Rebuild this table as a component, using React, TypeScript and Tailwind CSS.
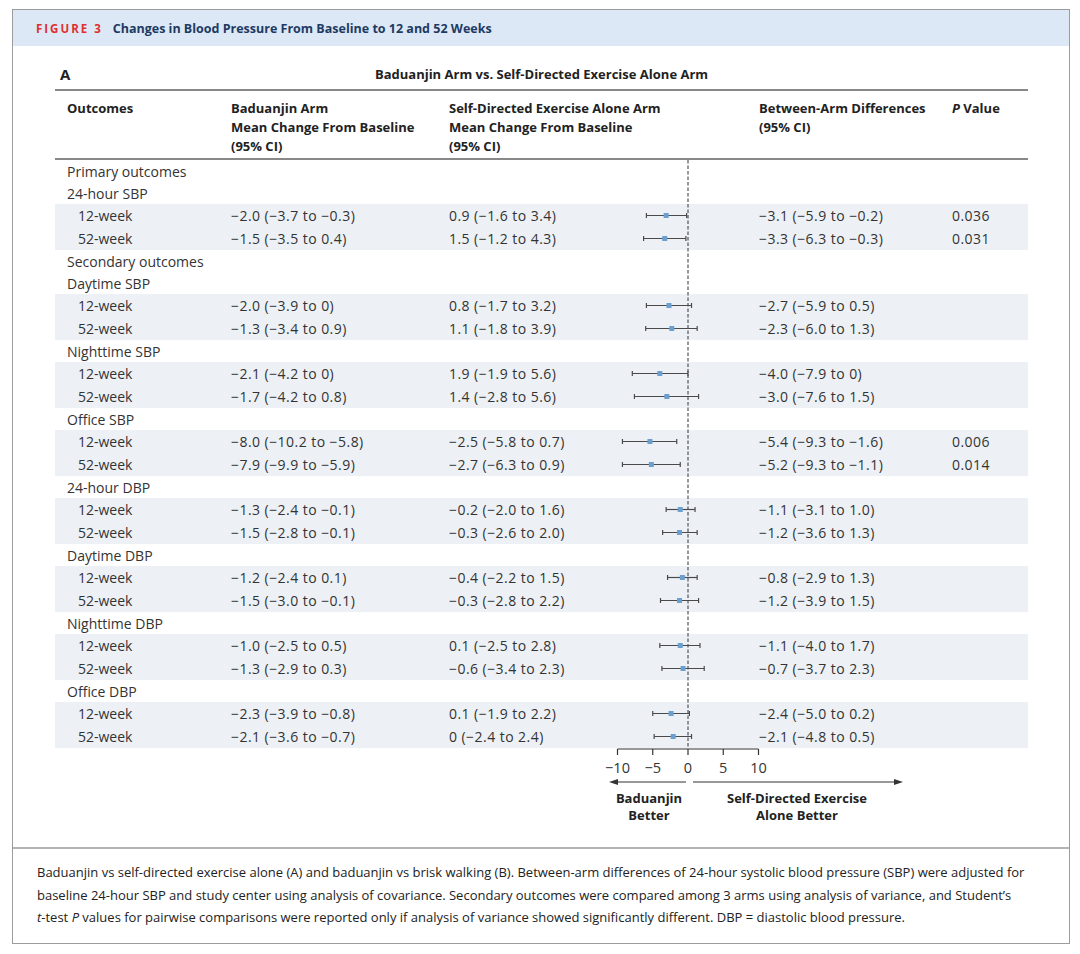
import React from 'react';

type Row = { label: string; b: string; s: string; d: string; est: number; lo: number; hi: number; p?: string };
type Group = { title?: string; head?: string; rows: Row[] };

const groups: Group[] = [
    {
        title: 'Primary outcomes',
        head: '24-hour SBP',
        rows: [
            { label: '12-week', b: '−2.0 (−3.7 to −0.3)', s: '0.9 (−1.6 to 3.4)', d: '−3.1 (−5.9 to −0.2)', est: -3.1, lo: -5.9, hi: -0.2, p: '0.036' },
            { label: '52-week', b: '−1.5 (−3.5 to 0.4)', s: '1.5 (−1.2 to 4.3)', d: '−3.3 (−6.3 to −0.3)', est: -3.3, lo: -6.3, hi: -0.3, p: '0.031' },
        ],
    },
    {
        title: 'Secondary outcomes',
        head: 'Daytime SBP',
        rows: [
            { label: '12-week', b: '−2.0 (−3.9 to 0)', s: '0.8 (−1.7 to 3.2)', d: '−2.7 (−5.9 to 0.5)', est: -2.7, lo: -5.9, hi: 0.5 },
            { label: '52-week', b: '−1.3 (−3.4 to 0.9)', s: '1.1 (−1.8 to 3.9)', d: '−2.3 (−6.0 to 1.3)', est: -2.3, lo: -6.0, hi: 1.3 },
        ],
    },
    {
        head: 'Nighttime SBP',
        rows: [
            { label: '12-week', b: '−2.1 (−4.2 to 0)', s: '1.9 (−1.9 to 5.6)', d: '−4.0 (−7.9 to 0)', est: -4.0, lo: -7.9, hi: 0 },
            { label: '52-week', b: '−1.7 (−4.2 to 0.8)', s: '1.4 (−2.8 to 5.6)', d: '−3.0 (−7.6 to 1.5)', est: -3.0, lo: -7.6, hi: 1.5 },
        ],
    },
    {
        head: 'Office SBP',
        rows: [
            { label: '12-week', b: '−8.0 (−10.2 to −5.8)', s: '−2.5 (−5.8 to 0.7)', d: '−5.4 (−9.3 to −1.6)', est: -5.4, lo: -9.3, hi: -1.6, p: '0.006' },
            { label: '52-week', b: '−7.9 (−9.9 to −5.9)', s: '−2.7 (−6.3 to 0.9)', d: '−5.2 (−9.3 to −1.1)', est: -5.2, lo: -9.3, hi: -1.1, p: '0.014' },
        ],
    },
    {
        head: '24-hour DBP',
        rows: [
            { label: '12-week', b: '−1.3 (−2.4 to −0.1)', s: '−0.2 (−2.0 to 1.6)', d: '−1.1 (−3.1 to 1.0)', est: -1.1, lo: -3.1, hi: 1.0 },
            { label: '52-week', b: '−1.5 (−2.8 to −0.1)', s: '−0.3 (−2.6 to 2.0)', d: '−1.2 (−3.6 to 1.3)', est: -1.2, lo: -3.6, hi: 1.3 },
        ],
    },
    {
        head: 'Daytime DBP',
        rows: [
            { label: '12-week', b: '−1.2 (−2.4 to 0.1)', s: '−0.4 (−2.2 to 1.5)', d: '−0.8 (−2.9 to 1.3)', est: -0.8, lo: -2.9, hi: 1.3 },
            { label: '52-week', b: '−1.5 (−3.0 to −0.1)', s: '−0.3 (−2.8 to 2.2)', d: '−1.2 (−3.9 to 1.5)', est: -1.2, lo: -3.9, hi: 1.5 },
        ],
    },
    {
        head: 'Nighttime DBP',
        rows: [
            { label: '12-week', b: '−1.0 (−2.5 to 0.5)', s: '0.1 (−2.5 to 2.8)', d: '−1.1 (−4.0 to 1.7)', est: -1.1, lo: -4.0, hi: 1.7 },
            { label: '52-week', b: '−1.3 (−2.9 to 0.3)', s: '−0.6 (−3.4 to 2.3)', d: '−0.7 (−3.7 to 2.3)', est: -0.7, lo: -3.7, hi: 2.3 },
        ],
    },
    {
        head: 'Office DBP',
        rows: [
            { label: '12-week', b: '−2.3 (−3.9 to −0.8)', s: '0.1 (−1.9 to 2.2)', d: '−2.4 (−5.0 to 0.2)', est: -2.4, lo: -5.0, hi: 0.2 },
            { label: '52-week', b: '−2.1 (−3.6 to −0.7)', s: '0 (−2.4 to 2.4)', d: '−2.1 (−4.8 to 0.5)', est: -2.1, lo: -4.8, hi: 0.5 },
        ],
    },
];

// forest plot scale
const ZERO = 98;
const PX = 7.05;
const xs = (v: number) => ZERO + v * PX;
const DASH = 5.5;

// dashed zero line, phase kept continuous from row to row
const ZeroLine = ({ h, y0 }: { h: number; y0: number }) => (
    <line x1={ZERO} x2={ZERO} y1={0} y2={h} stroke="#333" strokeWidth={1} strokeDasharray="3.5 2" strokeDashoffset={y0 % DASH} />
);

const LabelRow = ({ text, y0 }: { text: string; y0: number }) => (
    <div className="flex h-[22px] items-center">
        <div className="w-[535px] shrink-0 pl-[12px] whitespace-nowrap">{text}</div>
        <svg width={169} height={22} className="shrink-0">
            <ZeroLine h={22} y0={y0} />
        </svg>
    </div>
);

const DataRow = ({ r, y0 }: { r: Row; y0: number }) => (
    <div className="flex h-[23px] items-center whitespace-nowrap">
        <div className="w-[176px] shrink-0 pl-[23px]">{r.label}</div>
        <div className="w-[218px] shrink-0 tracking-[0.45px]">{r.b}</div>
        <div className="w-[141px] shrink-0 tracking-[0.45px]">{r.s}</div>
        <svg width={169} height={23} className="shrink-0">
            <ZeroLine h={23} y0={y0} />
            <line x1={xs(r.lo)} x2={xs(r.hi)} y1={11.5} y2={11.5} stroke="#4a4a4a" strokeWidth={1.2} />
            <line x1={xs(r.lo)} x2={xs(r.lo)} y1={9} y2={14} stroke="#4a4a4a" strokeWidth={1.2} />
            <line x1={xs(r.hi)} x2={xs(r.hi)} y1={9} y2={14} stroke="#4a4a4a" strokeWidth={1.2} />
            <rect x={xs(r.est) - 2.5} y={9} width={5} height={5} fill="#6a9fd0" />
        </svg>
        <div className="w-[193px] shrink-0 tracking-[0.45px]">{r.d}</div>
        <div className="tracking-[0.45px]">{r.p}</div>
    </div>
);

const App = (): JSX.Element => {
    let y = 0;
    const body: React.ReactNode[] = [];
    groups.forEach((g, gi) => {
        if (g.title) {
            body.push(<LabelRow key={`t${gi}`} text={g.title} y0={y} />);
            y += 22;
        }
        body.push(<LabelRow key={`h${gi}`} text={g.head ?? ''} y0={y} />);
        y += 22;
        body.push(
            <div key={`r${gi}`} className="bg-[#edf1f6]">
                {g.rows.map((r, ri) => {
                    const el = <DataRow key={ri} r={r} y0={y} />;
                    y += 23;
                    return el;
                })}
            </div>
        );
    });

    return (
        <div className="w-[1080px] h-[954px] bg-white pt-[9px] pl-[12px] font-['Open_Sans',sans-serif] text-[14px] text-[#333]">
            <div className="w-[1058px] border border-[#9c9c9c]">
                {/* figure title band */}
                <div className="h-[36px] bg-[#dce8f5] flex items-center pl-[23px] gap-[10px] pt-[2px]">
                    <span className="text-[11.5px] font-bold tracking-[2px] text-[#e0302d]">FIGURE 3</span>
                    <span className="text-[12.5px] font-bold text-[#1d3a63]">Changes in Blood Pressure From Baseline to 12 and 52 Weeks</span>
                </div>

                {/* panel A */}
                <div className="pl-[42px] border-b-2 border-[#b4b4b4]">
                    <div className="w-[973px]">
                        <div className="relative h-[45px] flex items-end justify-center pb-[5px] border-b-2 border-[#888]">
                            <span className="absolute left-[5px] bottom-[4px] text-[15px] font-bold text-[#222]">A</span>
                            <span className="text-[13px] font-bold text-[#222]">Baduanjin Arm vs. Self-Directed Exercise Alone Arm</span>
                        </div>
                        <div className="flex h-[69px] pt-[8px] border-b-2 border-[#888] text-[13px] font-bold leading-[19px] text-[#222] whitespace-nowrap">
                            <div className="w-[176px] shrink-0 pl-[12px]">Outcomes</div>
                            <div className="w-[218px] shrink-0">
                                Baduanjin Arm<br />Mean Change From Baseline<br />(95% CI)
                            </div>
                            <div className="w-[310px] shrink-0">
                                Self-Directed Exercise Alone Arm<br />Mean Change From Baseline<br />(95% CI)
                            </div>
                            <div className="w-[193px] shrink-0">
                                Between-Arm Differences<br />(95% CI)
                            </div>
                            <div>
                                <i>P</i> Value
                            </div>
                        </div>

                        <div>{body}</div>

                        {/* axis */}
                        <div className="flex h-[99px]">
                            <div className="w-[535px] shrink-0" />
                            <svg width={330} height={99} className="shrink-0">
                                <line x1={xs(-10)} x2={xs(10)} y1={1} y2={1} stroke="#333" strokeWidth={1.2} />
                                {[-10, -5, 0, 5, 10].map((t) => (
                                    <g key={t}>
                                        <line x1={xs(t)} x2={xs(t)} y1={1} y2={7} stroke="#333" strokeWidth={1.2} />
                                        <text x={xs(t)} y={25} textAnchor="middle" fontSize={14.5} fill="#333">
                                            {t < 0 ? `−${-t}` : t}
                                        </text>
                                    </g>
                                ))}
                                <line x1={96} x2={26} y1={34} y2={34} stroke="#333" strokeWidth={1.2} />
                                <polygon points="19,34 28,31 28,37" fill="#333" />
                                <line x1={103} x2={306} y1={34} y2={34} stroke="#333" strokeWidth={1.2} />
                                <polygon points="313,34 304,31 304,37" fill="#333" />
                                <g fontSize={13} fontWeight={700} fill="#222" textAnchor="middle">
                                    <text x={59} y={55}>Baduanjin</text>
                                    <text x={59} y={72}>Better</text>
                                    <text x={207} y={55}>Self-Directed Exercise</text>
                                    <text x={207} y={72}>Alone Better</text>
                                </g>
                            </svg>
                        </div>
                    </div>
                </div>

                {/* caption */}
                <div className="pl-[24px] pt-[12px] pb-[14px] text-[13px] leading-[22.5px] text-[#222] whitespace-nowrap">
                    Baduanjin vs self-directed exercise alone (A) and baduanjin vs brisk walking (B). Between-arm differences of 24-hour systolic blood pressure (SBP) were adjusted for
                    <br />
                    baseline 24-hour SBP and study center using analysis of covariance. Secondary outcomes were compared among 3 arms using analysis of variance, and Student’s
                    <br />
                    <i>t</i>-test <i>P</i> values for pairwise comparisons were reported only if analysis of variance showed significantly different. DBP = diastolic blood pressure.
                </div>
            </div>
        </div>
    );
};

export default App;
